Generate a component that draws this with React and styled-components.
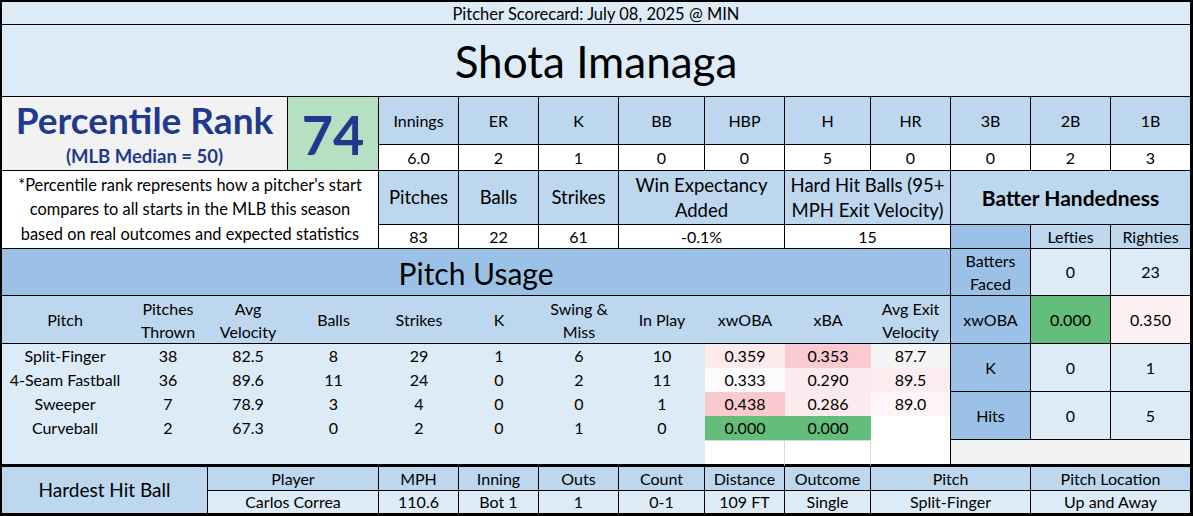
import React from 'react';
import styled, { createGlobalStyle } from 'styled-components';

const GlobalStyle = createGlobalStyle`
  html, body {
    margin: 0;
    padding: 0;
    background: #fff;
  }
  body {
    font-family: Lato, "Open Sans", sans-serif;
    color: #000;
  }
`;

const COLS = [126, 80, 80, 91, 80, 80, 80, 86, 80, 86, 80, 80, 80, 80];
const ROWS = [23, 72, 48, 26, 54, 24, 47, 48, 24, 24, 24, 24, 27, 24, 23];

const NAVY = '#1f3a8c';
const PALE = '#ddebf7';
const MID = '#bdd7ee';
const DEEP = '#9bc2e6';
const GREY = '#f2f2f2';
const GREEN = '#63be7b';

const Sheet = styled.div`
  display: grid;
  grid-template-columns: ${COLS.map(c => c + 'px').join(' ')};
  grid-template-rows: ${ROWS.map(r => r + 'px').join(' ')};
  width: 1193px;
  height: 516px;
  box-sizing: border-box;
  border: 2px solid #000;
  background: #fff;
`;

const Cell = styled.div`
  box-sizing: border-box;
  grid-column: ${p => p.$col};
  grid-row: ${p => p.$row || 'auto'};
  display: grid;
  place-items: center;
  text-align: center;
  background: ${p => p.$bg || '#fff'};
  border-right: 1px solid #000;
  border-bottom: 1px solid #000;
  font-size: 16px;
  line-height: 1.2;
  white-space: nowrap;
  overflow: hidden;
`;

const Lines = styled.span`
  display: block;
  line-height: ${p => p.$lh || 23}px;
`;

const Banner = styled(Cell)`
  background: ${PALE};
  font-size: 16.5px;
  padding-top: 3px;
`;

const PlayerName = styled(Cell)`
  background: ${PALE};
  font-size: 44px;
  padding-top: 2px;
`;

const RankBox = styled(Cell)`
  display: flex;
  flex-direction: column;
  align-items: center;
  justify-content: center;
  background: ${GREY};
  color: ${NAVY};
  font-weight: 700;
`;

const RankTitle = styled.div`
  font-size: 37px;
  line-height: 40px;
  margin-top: 2px;
`;

const RankNote = styled.div`
  font-size: 18.5px;
  line-height: 26px;
  margin-top: 3px;
`;

const RankScore = styled(Cell)`
  background: #b5e0c3;
  color: ${NAVY};
  font-size: 54px;
  font-weight: 700;
  padding-top: 4px;
`;

const StatHead = styled(Cell)`
  background: ${MID};
  font-size: ${p => (p.$big ? 18.5 : 16)}px;
`;

const StatValue = styled(Cell)``;

const Note = styled(Cell)`
  font-size: 16.4px;
`;

const HandTitle = styled(Cell)`
  background: ${MID};
  font-size: 21px;
  font-weight: 700;
`;

const SectionTitle = styled(Cell)`
  background: ${DEEP};
  font-size: 30px;
  padding-top: 2px;
`;

const SplitLabel = styled(Cell)`
  background: ${DEEP};
`;

const SplitValue = styled(Cell)`
  background: ${p => p.$bg || PALE};
`;

const TableHead = styled(Cell)`
  background: ${MID};
  border-right: ${p => (p.$edge ? '1px solid #000' : 'none')};
`;

const TableCell = styled(Cell)`
  background: ${PALE};
  border-right: none;
  border-bottom: none;
`;

const HeatCell = styled(Cell)`
  background: ${p => p.$bg || '#fff'};
  border-right: ${p => (p.$edge ? '1px solid #000' : 'none')};
  border-bottom: none;
`;

const BlankCell = styled(Cell)`
  background: ${p => p.$bg || '#fff'};
  border-right: ${p => (p.$edge ? '1px solid #000' : p.$faint ? '1px solid #d9d9d9' : 'none')};
  border-bottom: 3px solid #000;
  ${p => p.$faint && 'box-shadow: inset 0 1px 0 #d9d9d9;'}
`;

const HitTitle = styled(Cell)`
  background: ${MID};
  font-size: 19px;
`;

const HitHead = styled(Cell)`
  background: ${MID};
`;

const HitValue = styled(Cell)`
  background: ${PALE};
`;

const topStats = [
  ['Innings', '6.0'],
  ['ER', '2'],
  ['K', '1'],
  ['BB', '0'],
  ['HBP', '0'],
  ['H', '5'],
  ['HR', '0'],
  ['3B', '0'],
  ['2B', '2'],
  ['1B', '3'],
];

const tableHeads = [
  ['Pitch'],
  ['Pitches', 'Thrown'],
  ['Avg', 'Velocity'],
  ['Balls'],
  ['Strikes'],
  ['K'],
  ['Swing &', 'Miss'],
  ['In Play'],
  ['xwOBA'],
  ['xBA'],
  ['Avg Exit', 'Velocity'],
];

const pitches = [
  { cells: ['Split-Finger', '38', '82.5', '8', '29', '1', '6', '10'], heat: [['0.359', '#fdeaed'], ['0.353', '#f9cbcf'], ['87.7', '#f3f6f4']] },
  { cells: ['4-Seam Fastball', '36', '89.6', '11', '24', '0', '2', '11'], heat: [['0.333', '#fefbfc'], ['0.290', '#fcebee'], ['89.5', '#fcedf0']] },
  { cells: ['Sweeper', '7', '78.9', '3', '4', '0', '0', '1'], heat: [['0.438', '#f8cace'], ['0.286', '#fcebee'], ['89.0', '#fdf5f7']] },
  { cells: ['Curveball', '2', '67.3', '0', '2', '0', '1', '0'], heat: [['0.000', GREEN], ['0.000', GREEN], ['', '#fff']] },
];

const hardest = [
  ['Player', 'Carlos Correa', '3 / 5'],
  ['MPH', '110.6', '5'],
  ['Inning', 'Bot 1', '6'],
  ['Outs', '1', '7'],
  ['Count', '0-1', '8'],
  ['Distance', '109 FT', '9'],
  ['Outcome', 'Single', '10'],
  ['Pitch', 'Split-Finger', '11 / 13'],
  ['Pitch Location', 'Up and Away', '13 / 15'],
];

export default function App() {
  return (
    <>
      <GlobalStyle />
      <Sheet>
        <Banner $col="1 / 15" $row="1">Pitcher Scorecard: July 08, 2025 @ MIN</Banner>
        <PlayerName $col="1 / 15" $row="2">Shota Imanaga</PlayerName>

        <RankBox $col="1 / 4" $row="3 / 5">
          <RankTitle>Percentile Rank</RankTitle>
          <RankNote>(MLB Median = 50)</RankNote>
        </RankBox>
        <RankScore $col="4" $row="3 / 5">74</RankScore>

        {topStats.map(([label, value], i) => (
          <React.Fragment key={label}>
            <StatHead $col={String(i + 5)} $row="3">{label}</StatHead>
            <StatValue $col={String(i + 5)} $row="4">{value}</StatValue>
          </React.Fragment>
        ))}

        <Note $col="1 / 5" $row="5 / 7">
          <Lines $lh={24.5}>
            *Percentile rank represents how a pitcher's start<br />
            compares to all starts in the MLB this season<br />
            based on real outcomes and expected statistics
          </Lines>
        </Note>

        <StatHead $big $col="5" $row="5">Pitches</StatHead>
        <StatHead $big $col="6" $row="5">Balls</StatHead>
        <StatHead $big $col="7" $row="5">Strikes</StatHead>
        <StatHead $big $col="8 / 10" $row="5">
          <Lines $lh={25}>Win Expectancy<br />Added</Lines>
        </StatHead>
        <StatHead $big $col="10 / 12" $row="5">
          <Lines $lh={25}>Hard Hit Balls (95+<br />MPH Exit Velocity)</Lines>
        </StatHead>
        <HandTitle $col="12 / 15" $row="5">Batter Handedness</HandTitle>

        <StatValue $col="5" $row="6">83</StatValue>
        <StatValue $col="6" $row="6">22</StatValue>
        <StatValue $col="7" $row="6">61</StatValue>
        <StatValue $col="8 / 10" $row="6">-0.1%</StatValue>
        <StatValue $col="10 / 12" $row="6">15</StatValue>
        <SplitLabel $col="12" $row="6" />
        <StatHead $col="13" $row="6">Lefties</StatHead>
        <StatHead $col="14" $row="6">Righties</StatHead>

        <SectionTitle $col="1 / 12" $row="7">Pitch Usage</SectionTitle>
        <SplitLabel $col="12" $row="7"><Lines>Batters<br />Faced</Lines></SplitLabel>
        <SplitValue $col="13" $row="7">0</SplitValue>
        <SplitValue $col="14" $row="7">23</SplitValue>

        {tableHeads.map((lines, i) => (
          <TableHead key={i} $col={String(i + 1)} $row="8" $edge={i === 10}>
            <Lines>
              {lines.map((l, j) => (
                <React.Fragment key={j}>
                  {j > 0 && <br />}
                  {l}
                </React.Fragment>
              ))}
            </Lines>
          </TableHead>
        ))}
        <SplitLabel $col="12" $row="8">xwOBA</SplitLabel>
        <SplitValue $col="13" $row="8" $bg={GREEN}>0.000</SplitValue>
        <SplitValue $col="14" $row="8" $bg="#fdf1f3">0.350</SplitValue>

        {pitches.map((p, r) => (
          <React.Fragment key={p.cells[0]}>
            {p.cells.map((v, c) => (
              <TableCell key={c} $col={String(c + 1)} $row={String(r + 9)}>{v}</TableCell>
            ))}
            {p.heat.map(([v, bg], c) => (
              <HeatCell key={'h' + c} $col={String(c + 9)} $row={String(r + 9)} $bg={bg} $edge={c === 2}>{v}</HeatCell>
            ))}
          </React.Fragment>
        ))}

        <SplitLabel $col="12" $row="9 / 11">K</SplitLabel>
        <SplitValue $col="13" $row="9 / 11">0</SplitValue>
        <SplitValue $col="14" $row="9 / 11">1</SplitValue>
        <SplitLabel $col="12" $row="11 / 13">Hits</SplitLabel>
        <SplitValue $col="13" $row="11 / 13">0</SplitValue>
        <SplitValue $col="14" $row="11 / 13">5</SplitValue>

        <BlankCell $col="1 / 9" $row="13" $bg={PALE} />
        <BlankCell $col="9" $row="13" $faint />
        <BlankCell $col="10" $row="13" $faint />
        <BlankCell $col="11" $row="13" $edge />
        <BlankCell $col="12 / 15" $row="13" $bg={GREY} $edge />

        <HitTitle $col="1 / 3" $row="14 / 16">Hardest Hit Ball</HitTitle>
        {hardest.map(([head, value, col]) => (
          <React.Fragment key={head}>
            <HitHead $col={col} $row="14">{head}</HitHead>
            <HitValue $col={col} $row="15">{value}</HitValue>
          </React.Fragment>
        ))}
      </Sheet>
    </>
  );
}
